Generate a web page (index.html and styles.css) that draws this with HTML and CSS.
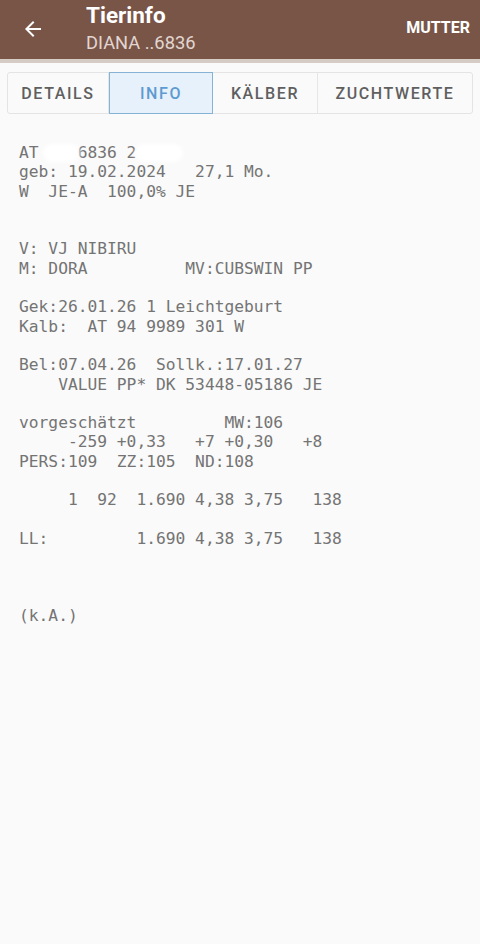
FILE: index.html
```html
<!DOCTYPE html>
<html lang="de">
<head>
<meta charset="utf-8">
<link rel="stylesheet" href="styles.css">
</head>
<body>
<header class="appbar">
  <div class="back">
    <svg width="24" height="24" viewBox="0 0 24 24"><path d="M20 11H7.83l5.59-5.59L12 4l-8 8 8 8 1.41-1.41L7.83 13H20v-2z" fill="#fff"/></svg>
  </div>
  <div class="titles">
    <div class="title">Tierinfo</div>
    <div class="subtitle">DIANA ..6836</div>
  </div>
  <div class="action">MUTTER</div>
</header>
<div class="band"></div>
<nav class="tabs">
  <div class="tab t1">DETAILS</div>
  <div class="tab t2 active">INFO</div>
  <div class="tab t3">KÄLBER</div>
  <div class="tab t4">ZUCHTWERTE</div>
</nav>
<div class="content">
<div class="firstline"><pre class="mono">AT    6836 2</pre><span class="blob b1"></span><span class="blob b2"></span></div>
<pre class="mono">geb: 19.02.2024   27,1 Mo.
W  JE-A  100,0% JE


V: VJ NIBIRU
M: DORA          MV:CUBSWIN PP

Gek:26.01.26 1 Leichtgeburt
Kalb:  AT 94 9989 301 W

Bel:07.04.26  Sollk.:17.01.27
    VALUE PP* DK 53448-05186 JE

vorgeschätzt         MW:106
     -259 +0,33   +7 +0,30   +8
PERS:109  ZZ:105  ND:108

     1  92  1.690 4,38 3,75   138

LL:         1.690 4,38 3,75   138



(k.A.)</pre>
</div>
</body>
</html>
```
FILE: styles.css
```css
html, body {
  margin: 0;
  padding: 0;
}
body {
  width: 480px;
  height: 944px;
  background: #fafafa;
  font-family: Roboto, "Noto Sans", sans-serif;
  overflow: hidden;
}
.appbar {
  height: 59px;
  background: #795548;
  display: flex;
  align-items: center;
  color: #fff;
}
.back {
  width: 24px;
  height: 24px;
  margin-left: 21px;
  margin-top: -2px;
}
.back svg { display: block; }
.titles {
  margin-left: 41px;
  flex: 1;
  display: flex;
  flex-direction: column;
  height: 59px;
  box-sizing: border-box;
  padding-top: 2px;
}
.title {
  font-size: 22.5px;
  font-weight: 700;
  line-height: 26px;
}
.subtitle {
  font-size: 18.3px;
  line-height: 30px;
  color: #e2d6d1;
}
.action {
  font-size: 16px;
  font-weight: 700;
  margin-right: 10px;
  margin-top: -4px;
}
.band {
  height: 4px;
  background: #d6ccc6;
}
.tabs {
  display: flex;
  margin: 9px 7px 0 7px;
  height: 42px;
  border: 1px solid #e4e4e4;
  border-radius: 3px;
  background: #fafafa;
  box-sizing: border-box;
}
.tab {
  display: flex;
  align-items: center;
  justify-content: center;
  font-size: 16px;
  font-weight: 500;
  letter-spacing: 1.6px;
  color: #5f5f5f;
  border-right: 1px solid #e6e6e6;
  box-sizing: border-box;
  padding-top: 1px;
}
.t1 { width: 101px; }
.t2 { width: 104px; }
.t3 { width: 105px; }
.t4 { flex: 1; border-right: none; }
.tab.active {
  background: #e6f1fb;
  border: 1px solid #86b3d5;
  color: #5e9bd0;
  margin: -1px 0;
}
.content {
  padding: 29px 0 0 19px;
}
.mono {
  margin: 0;
  font-family: "DejaVu Sans Mono", "Liberation Mono", monospace;
  font-size: 16.25px;
  line-height: 19.3px;
  color: #747474;
}
.firstline {
  position: relative;
}
.blob {
  position: absolute;
  background: #fff;
  border-radius: 10px;
  filter: blur(2px);
}
.b1 { left: 24px; top: 1px; width: 37px; height: 18px; }
.b2 { left: 116px; top: 1px; width: 48px; height: 18px; }
```
